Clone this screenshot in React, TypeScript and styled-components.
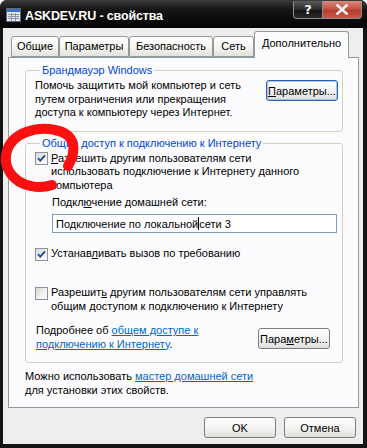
import styled, { createGlobalStyle } from 'styled-components';

const GlobalStyle = createGlobalStyle`
  html, body {
    margin: 0;
    padding: 0;
    background: #ffffff;
  }
  body {
    font-family: "Liberation Sans", Arial, sans-serif;
    font-size: 11px;
    color: #000;
  }
`;

const tabs = [
  { label: 'Общие', width: 48 },
  { label: 'Параметры', width: 70 },
  { label: 'Безопасность', width: 84 },
  { label: 'Сеть', width: 41 },
  { label: 'Дополнительно', width: 95, active: true },
];

function CheckBox({ checked }: { checked?: boolean }) {
  return (
    <Box>
      {checked && (
        <svg width="11" height="11" viewBox="0 0 11 11">
          <path d="M2 5.2 L4.3 7.6 L9 2.4" fill="none" stroke="#2a4a9e" strokeWidth="1.9" />
        </svg>
      )}
    </Box>
  );
}

export default function App() {
  return (
    <>
      <GlobalStyle />
      <Window>
        <TitleBar>
          <TitleIcon>
            <svg width="17" height="16" viewBox="0 0 17 16">
              <rect x="1.5" y="1.5" width="14" height="13" fill="#e4e9ef" stroke="#59697e" />
              <rect x="2" y="2" width="13" height="3" fill="#3d6fc4" />
              <path d="M3 7.5 H14 M3 9.5 H14 M3 11.5 H14 M6.5 6 V14 M10.5 6 V14" stroke="#8b97a8" strokeWidth="1" />
            </svg>
          </TitleIcon>
          <TitleText>ASKDEV.RU - свойства</TitleText>
          <CaptionButtons>
            <HelpButton>?</HelpButton>
            <CloseButton>
              <svg width="14" height="11" viewBox="0 0 14 11">
                <path d="M2.5 1.5 L11.5 9.5 M11.5 1.5 L2.5 9.5" stroke="#f4f0ee" strokeWidth="2.6" strokeLinecap="square" />
              </svg>
            </CloseButton>
          </CaptionButtons>
        </TitleBar>

        <Body>
          <TabRow>
            {tabs.map((t) => (
              <Tab key={t.label} $w={t.width} $active={t.active}>
                {t.label}
              </Tab>
            ))}
          </TabRow>

          <TabPage>
            <Group>
              <Legend>Брандмауэр Windows</Legend>
              <GroupRow>
                <Text>
                  Помочь защитить мой компьютер и сеть
                  <br />
                  путем ограничения или прекращения
                  <br />
                  доступа к компьютеру через Интернет.
                </Text>
                <Button $focused $top={1}>
                  <u>П</u>араметры...
                </Button>
              </GroupRow>
            </Group>

            <Group $gap={5}>
              <Legend>Общий доступ к подключению к Интернету</Legend>

              <CheckRow>
                <CheckBox checked />
                <Text>
                  <u>Р</u>азрешить другим пользователям сети
                  <br />
                  использовать подключение к Интернету данного
                  <br />
                  компьютера
                </Text>
              </CheckRow>

              <Nested $top={3.5}>
                <Text>
                  Подкл<u>ю</u>чение домашней сети:
                </Text>
              </Nested>
              <Nested $top={5}>
                <Input>
                  Подключение по локальной
                  <Caret />
                  {' '}сети 3
                </Input>
              </Nested>

              <CheckRow $top={14}>
                <CheckBox checked />
                <Text>
                  Устанав<u>л</u>ивать вызов по требованию
                </Text>
              </CheckRow>

              <CheckRow $top={25.5}>
                <CheckBox />
                <Text>
                  Разрешит<u>ь</u> другим пользователям сети управлять
                  <br />
                  общим доступом к подключению к Интернету
                </Text>
              </CheckRow>

              <InfoRow>
                <Text>
                  Подробнее об <Link>общем доступе к</Link>
                  <br />
                  <Link>подключению к Интернету</Link>.
                </Text>
                <Button $top={4}>
                  Пара<u>м</u>етры...
                </Button>
              </InfoRow>
            </Group>

            <Note>
              Можно использовать <Link>мастер домашней сети</Link>
              <br />
              для установки этих свойств.
            </Note>
          </TabPage>

          <Footer>
            <DialogButton>OK</DialogButton>
            <DialogButton>Отмена</DialogButton>
          </Footer>
        </Body>

        <Scribble width="367" height="448" viewBox="0 0 367 448">
          <path
            d="M68 166 C77 150, 76 134, 55 130 C36 126, 12 133, 7 151 C2 168, 14 183, 31 186 C39 188, 46 187, 52 185"
            fill="none"
            stroke="#fb0f0f"
            strokeWidth="10"
            strokeLinecap="round"
          />
        </Scribble>
      </Window>
    </>
  );
}

/* Styled Components */

const Window = styled.div`
  position: relative;
  width: 367px;
  height: 448px;
  display: flex;
  flex-direction: column;
  background: #141414;
  border-radius: 7px 7px 0 0;
  overflow: hidden;
`;

const TitleBar = styled.div`
  height: 28px;
  flex: none;
  display: flex;
  align-items: center;
  padding: 0 5px 0 5px;
  background: linear-gradient(#3c3c3c 0%, #151515 35%, #050505 100%);
`;

const TitleIcon = styled.div`
  width: 17px;
  height: 16px;
  display: flex;
  margin-right: 3px;
  margin-top: 2px;
`;

const TitleText = styled.div`
  color: #ffffff;
  font-weight: 700;
  font-size: 12.5px;
  letter-spacing: -0.15px;
  margin-top: 3px;
`;

const CaptionButtons = styled.div`
  margin-left: auto;
  align-self: flex-start;
  display: flex;
  margin-top: 1px;
`;

const CaptionButton = styled.div`
  height: 18px;
  box-sizing: border-box;
  border: 1px solid #8d8d8d;
  border-top: none;
  display: flex;
  align-items: center;
  justify-content: center;
`;

const HelpButton = styled(CaptionButton)`
  width: 30px;
  border-radius: 0 0 0 4px;
  background: linear-gradient(#5a5a5a, #2a2a2a 50%, #111 51%, #2b2b2b);
  color: #f2f2f2;
  font-weight: 700;
  font-size: 13px;
  font-family: "DejaVu Sans", sans-serif;
`;

const CloseButton = styled(CaptionButton)`
  width: 39px;
  border-left: none;
  border-radius: 0 0 4px 0;
  background: linear-gradient(#d98a7f, #c24d3f 50%, #b3382a 51%, #c75a4b);
`;

const Body = styled.div`
  flex: 1;
  margin: 0 4px 4px 3px;
  padding: 3px 4px 0 5px;
  background: #eeeeec;
  display: flex;
  flex-direction: column;
`;

const TabRow = styled.div`
  height: 26px;
  display: flex;
  align-items: flex-end;
  padding-left: 3px;
  position: relative;
  z-index: 1;
`;

const Tab = styled.div<{ $w: number; $active?: boolean }>`
  width: ${(p) => p.$w}px;
  box-sizing: border-box;
  height: ${(p) => (p.$active ? 27 : 21)}px;
  margin-bottom: ${(p) => (p.$active ? -1 : 0)}px;
  border: 1px solid #919b9c;
  border-bottom: ${(p) => (p.$active ? 'none' : '1px solid #919b9c')};
  border-radius: 3px 3px 0 0;
  background: ${(p) => (p.$active ? '#fcfcfe' : 'linear-gradient(#ffffff, #f3f3ef 60%, #e3e3dc)')};
  text-align: center;
  line-height: ${(p) => (p.$active ? '15px' : '17px')};
  padding-top: ${(p) => (p.$active ? '4px' : '1px')};
  font-size: 11px;
`;

const TabPage = styled.div`
  height: 351px;
  box-sizing: border-box;
  border: 1px solid #919b9c;
  background: #fcfcfe;
  padding: 6px 15px 0 16px;
  display: flex;
  flex-direction: column;
`;

const Group = styled.fieldset<{ $gap?: number }>`
  margin: ${(p) => p.$gap ?? 0}px 0 0 0;
  padding: 2px 4px 11px 9px;
  border: 1px solid #d0d0bf;
  border-radius: 3px;
  min-width: 0;
`;

const Legend = styled.legend`
  padding: 0 2px;
  margin-left: 5px;
  color: #0046d5;
  line-height: 13px;
`;

const GroupRow = styled.div`
  display: flex;
  justify-content: space-between;
  align-items: flex-start;
`;

const Text = styled.div`
  line-height: 13.5px;
  white-space: nowrap;
`;

const Button = styled.div<{ $focused?: boolean; $top?: number }>`
  width: 72px;
  height: 21px;
  box-sizing: border-box;
  margin-top: ${(p) => p.$top ?? 0}px;
  border: 1px solid ${(p) => (p.$focused ? '#2f5fae' : '#7c7c7c')};
  border-radius: 3px;
  background: linear-gradient(#ffffff, #f1f1f0 60%, #dcdcd8);
  box-shadow: ${(p) => (p.$focused ? 'inset 0 0 0 1px #a8c4f0' : 'none')};
  display: flex;
  align-items: center;
  justify-content: center;
  white-space: nowrap;
`;

const CheckRow = styled.div<{ $top?: number }>`
  display: flex;
  align-items: flex-start;
  gap: 3px;
  margin-top: ${(p) => p.$top ?? 0}px;
`;

const Box = styled.div`
  width: 13px;
  height: 13px;
  flex: none;
  box-sizing: border-box;
  margin-top: 0.5px;
  border: 1px solid #8b939c;
  background: linear-gradient(135deg, #d8d8d3, #f7f7f5 70%, #ffffff);
  display: flex;
  align-items: center;
  justify-content: center;
`;

const Nested = styled.div<{ $top?: number }>`
  margin-left: 17px;
  margin-top: ${(p) => p.$top ?? 0}px;
`;

const Input = styled.div`
  width: 285px;
  height: 19px;
  box-sizing: border-box;
  border: 1px solid #7f9db9;
  background: #ffffff;
  padding: 0 3px;
  display: flex;
  align-items: center;
  white-space: pre;
`;

const Caret = styled.span`
  display: inline-block;
  width: 1px;
  height: 13px;
  background: #000;
`;

const InfoRow = styled.div`
  display: flex;
  justify-content: space-between;
  align-items: flex-start;
  margin: 11px 8px 0 1px;
`;

const Link = styled.span`
  color: #0066cc;
  text-decoration: underline;
`;

const Note = styled.div`
  margin-top: 7px;
  line-height: 13.5px;
  white-space: nowrap;
`;

const Footer = styled.div`
  display: flex;
  justify-content: flex-end;
  gap: 8px;
  margin-top: 9px;
  padding-right: 3px;
`;

const DialogButton = styled(Button)`
  width: 72px;
`;

const Scribble = styled.svg`
  position: absolute;
  left: 0;
  top: 0;
  pointer-events: none;
`;
